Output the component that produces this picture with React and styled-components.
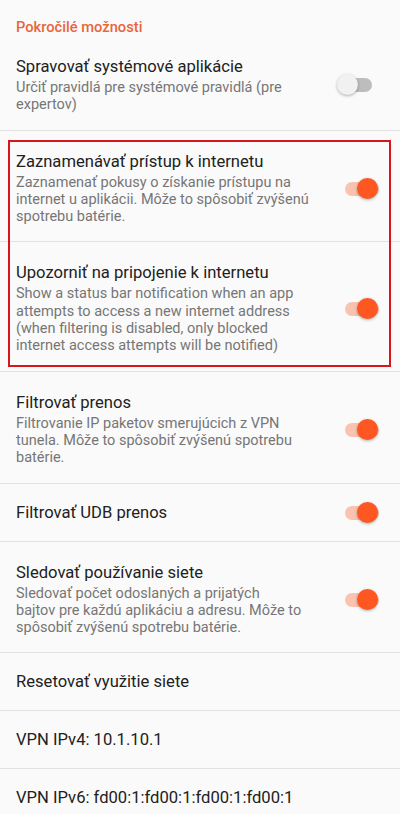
import styled, { createGlobalStyle } from "styled-components";

const GlobalStyle = createGlobalStyle`
  html, body {
    margin: 0;
    padding: 0;
    background: #fafafa;
  }
  body {
    font-family: Roboto, "Noto Sans", "Liberation Sans", sans-serif;
    -webkit-font-smoothing: antialiased;
  }
`

const Screen = styled.div`
  width: 400px;
  height: 814px;
  overflow: hidden;
  background: #fafafa;
`

const Category = styled.div`
  padding: 17px 16px 0 16px;
  height: 19px;
  font-size: 14.7px;
  line-height: 20px;
  font-weight: 500;
  color: #e8663a;
`

const Row = styled.div`
  display: flex;
  align-items: center;
  padding: ${p => p.$single ? "18px 21px 17px 16px" : "20px 21px 16px 16px"};
  border-bottom: 1px solid #e2e2e2;
`

const Texts = styled.div`
  flex: 1;
  min-width: 0;
  max-width: 300px;
  margin-right: auto;
`

const Title = styled.div`
  font-size: 16.6px;
  line-height: 22px;
  color: #212121;
  white-space: nowrap;
`

const Summary = styled.div`
  margin-top: 1px;
  font-size: 14.5px;
  line-height: 17.3px;
  color: #767676;
`

const Highlight = styled.div`
  position: relative;

  &::after {
    content: "";
    position: absolute;
    top: 9px;
    bottom: 5px;
    left: 8px;
    right: 9px;
    border: 2px solid #d9141c;
    pointer-events: none;
  }
`

const Switch = styled.div`
  position: relative;
  flex: none;
  width: 35px;
  height: 21px;
  margin-left: 16px;
  margin-right: ${p => p.$on ? "0" : "7px"};
`

const Track = styled.div`
  position: absolute;
  top: 4px;
  left: 1px;
  width: 34px;
  height: 14px;
  border-radius: 7px;
  background: ${p => p.$on ? "#f9c3b0" : "#bdbdbd"};
`

const Thumb = styled.div`
  position: absolute;
  top: 0;
  left: ${p => p.$on ? "13px" : "0"};
  width: 21px;
  height: 21px;
  border-radius: 50%;
  background: ${p => p.$on ? "#ff5722" : "#f1f1f1"};
  box-shadow: 0 1px 3px rgba(0, 0, 0, 0.3);
`

function Toggle({ on }) {
  return (
    <Switch $on={on}>
      <Track $on={on} />
      <Thumb $on={on} />
    </Switch>
  )
}

function Pref({ title, summary, toggle }) {
  return (
    <Row $single={!summary}>
      <Texts>
        <Title>{title}</Title>
        {summary && <Summary>{summary}</Summary>}
      </Texts>
      {toggle !== undefined && <Toggle on={toggle} />}
    </Row>
  )
}

export default function App() {
  return (
    <Screen>
      <GlobalStyle />
      <Category>Pokročilé možnosti</Category>
      <Pref
        title="Spravovať systémové aplikácie"
        summary="Určiť pravidlá pre systémové pravidlá (pre expertov)"
        toggle={false}
      />
      <Highlight>
        <Pref
          title="Zaznamenávať prístup k internetu"
          summary="Zaznamenať pokusy o získanie prístupu na internet u aplikácii. Môže to spôsobiť zvýšenú spotrebu batérie."
          toggle={true}
        />
        <Pref
          title="Upozorniť na pripojenie k internetu"
          summary="Show a status bar notification when an app attempts to access a new internet address (when filtering is disabled, only blocked internet access attempts will be notified)"
          toggle={true}
        />
      </Highlight>
      <Pref
        title="Filtrovať prenos"
        summary="Filtrovanie IP paketov smerujúcich z VPN tunela. Môže to spôsobiť zvýšenú spotrebu batérie."
        toggle={true}
      />
      <Pref title="Filtrovať UDB prenos" toggle={true} />
      <Pref
        title="Sledovať používanie siete"
        summary={<>Sledovať počet odoslaných a prijatých<br />bajtov pre každú aplikáciu a adresu. Môže to spôsobiť zvýšenú spotrebu batérie.</>}
        toggle={true}
      />
      <Pref title="Resetovať využitie siete" />
      <Pref title="VPN IPv4: 10.1.10.1" />
      <Pref title="VPN IPv6: fd00:1:fd00:1:fd00:1:fd00:1" />
    </Screen>
  )
}
